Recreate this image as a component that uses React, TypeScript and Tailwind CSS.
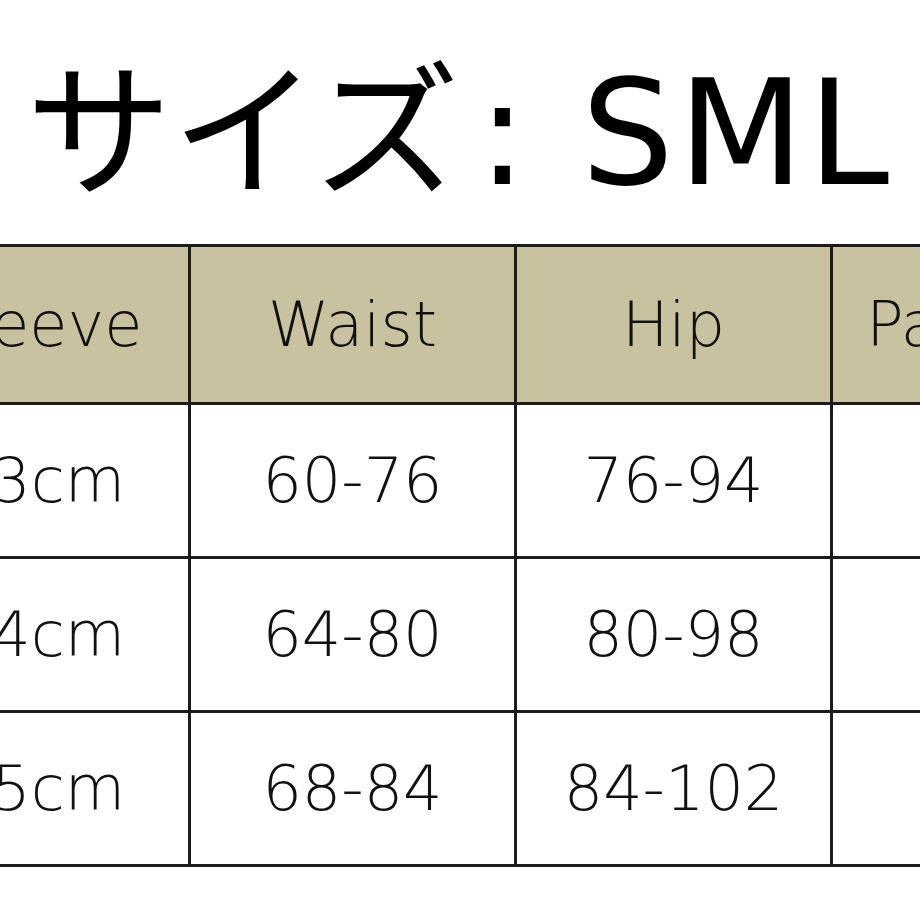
import React from 'react';

const headers = ['Sleeve', 'Waist', 'Hip', 'Pants'];

const rows = [
  ['63cm', '60-76', '76-94', ''],
  ['64cm', '64-80', '80-98', ''],
  ['65cm', '68-84', '84-102', ''],
];

const cellBase =
  'flex items-center justify-center border-l-[3px] border-t-[3px] border-[#1c1c1c] text-[62px] leading-none font-extralight text-[#111] whitespace-nowrap';

export default function App() {
  return (
    <div className="w-[920px] h-[920px] bg-white overflow-hidden" style={{ fontFamily: '"DejaVu Sans", "Noto Sans CJK JP", sans-serif' }}>
      {/* Title */}
      <div className="h-[244px] pl-[26px] pt-[60px]">
        <h1 className="text-[146px] leading-none font-normal text-black whitespace-nowrap">
          サイズ<span className="ml-[18px] tracking-[4px]">: SML</span>
        </h1>
      </div>

      {/* Size table, cropped on both sides */}
      <div className="ml-[-114px] w-[1182px]">
        <div className="grid grid-cols-[302px_326px_316px_238px] border-b-[3px] border-[#1c1c1c]">
          {headers.map((h) => (
            <div key={h} className={`${cellBase} h-[158px] bg-[#c9c2a1]`}>
              {h}
            </div>
          ))}
          {rows.map((row, i) =>
            row.map((value, j) => (
              <div key={`${i}-${j}`} className={`${cellBase} h-[154px] bg-white`}>
                {value}
              </div>
            ))
          )}
        </div>
      </div>
    </div>
  );
}
